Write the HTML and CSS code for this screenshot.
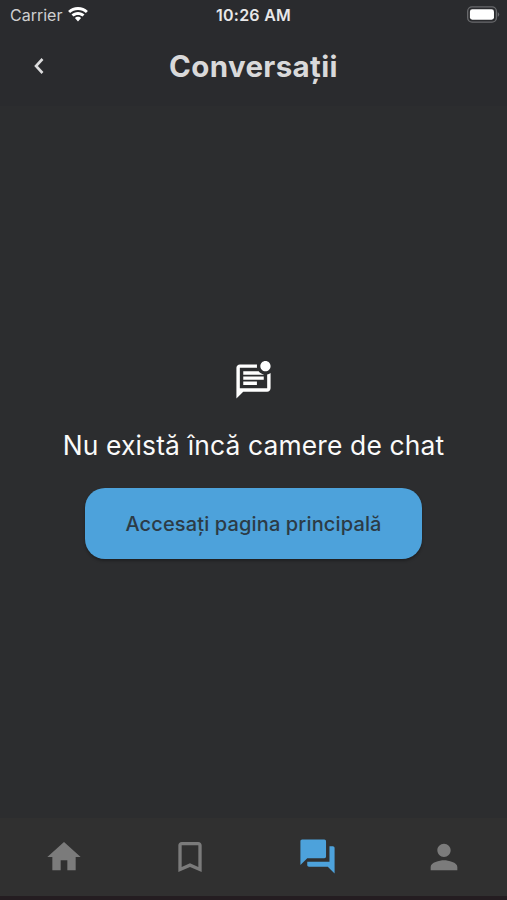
FILE: index.html
```html
<!DOCTYPE html>
<html lang="ro">
<head>
<meta charset="utf-8">
<title>Conversații</title>
<link rel="stylesheet" href="styles.css">
</head>
<body>
<div class="screen">
  <header class="top">
    <div class="status">
      <div class="carrier"><span>Carrier</span>
        <svg class="wifi" viewBox="0 0 20 15"><path d="M10 0C6.200 0 2.700 1.500.100 3.900l2 2.100C4.200 4.100 7 2.900 10 2.900s5.800 1.200 7.900 3.100l2-2.100C17.300 1.500 13.800 0 10 0zM10 5C7.500 5 5.200 6 3.500 7.500l2 2.100C6.700 8.500 8.300 7.900 10 7.900s3.300.6 4.500 1.700l2-2.100C14.800 6 12.500 5 10 5zM10 9.800c-1.200 0-2.300.5-3.100 1.200L10 14.400l3.100-3.400c-.8-.7-1.900-1.200-3.100-1.200z"/></svg>
      </div>
      <span class="time">10:26 AM</span>
      <svg class="battery" viewBox="0 0 34 17"><rect x=".7" y=".7" width="29.600" height="15.600" rx="4.500" fill="none" stroke="#68696c" stroke-width="1.400"/><rect x="3" y="3.200" width="24.800" height="10.600" rx="2.500" fill="#fff"/><path d="M31.700 6q3 2.500 0 5z" fill="#68696c"/></svg>
    </div>
    <div class="bar">
      <svg class="back" viewBox="0 0 12 18"><path d="M9.500 2 3 9l6.500 7"/></svg>
      <h1>Conversații</h1>
    </div>
  </header>
  <main class="empty">
    <svg class="chat" viewBox="0 0 24 24"><path d="M22 6.980V16c0 1.100-.9 2-2 2H6l-4 4V4c0-1.100.9-2 2-2h10.100c-.06.320-.1.660-.1 1s.04.680.1 1H4v12h16V7.900c.74-.15 1.420-.48 2-.92zM16 3c0 1.660 1.340 3 3 3s3-1.340 3-3-1.340-3-3-3-3 1.340-3 3zM6 12v2h8v-2H6zm0-3v2h12V9H6zm0-3v2h12v-.1c-1.210-.25-2.250-.95-2.970-1.900H6z"/></svg>
    <p>Nu există încă camere de chat</p>
    <button class="cta">Accesați pagina principală</button>
  </main>
  <nav class="tabs">
    <a class="home"><svg viewBox="0 0 24 24"><path d="M10 20v-6h4v6h5v-8h3L12 3 2 12h3v8z"/></svg></a>
    <a><svg viewBox="0 0 24 24"><path d="M17 3H7c-1.100 0-2 .9-2 2v16l7-3 7 3V5c0-1.100-.9-2-2-2zm0 15-5-2.180L7 18V5h10v13z"/></svg></a>
    <a class="active"><svg viewBox="0 0 24 24"><path d="M21 6h-2v9H6v2c0 .55.450 1 1 1h11l4 4V7c0-.55-.45-1-1-1zm-4 6V3c0-.55-.45-1-1-1H3c-.55 0-1 .45-1 1v14l4-4h10c.55 0 1-.45 1-1z"/></svg></a>
    <a><svg viewBox="0 0 24 24"><path d="M12 12c2.210 0 4-1.790 4-4s-1.790-4-4-4-4 1.790-4 4 1.790 4 4 4zm0 2c-2.670 0-8 1.340-8 4v2h16v-2c0-2.660-5.330-4-8-4z"/></svg></a>
  </nav>
</div>
</body>
</html>
```
FILE: styles.css
```css
* { box-sizing: border-box; }
body { margin: 0; background: #2c2d2f; font-family: Inter, "Liberation Sans", sans-serif; }
.screen { width: 507px; height: 900px; display: flex; flex-direction: column; overflow: hidden; }
.top { height: 106px; background: #2a2b2e; }
.status { height: 29px; display: grid; grid-template-columns: 1fr auto 1fr; align-items: center; padding: 0 7px 0 10px; color: #e8e8e9; font-size: 16px; }
.carrier { display: flex; align-items: center; gap: 6px; color: #cfcfd0; letter-spacing: 0; }
.wifi { width: 20px; height: 15px; fill: #fff; }
.time { font-weight: 600; letter-spacing: .25px; margin-right: 3px; }
.battery { width: 33px; height: 17px; justify-self: end; }
.bar { height: 74px; display: grid; grid-template-columns: 80px 1fr 80px; align-items: center; }
.back { width: 12px; height: 18px; margin-left: 33px; fill: none; stroke: #dcdcdd; stroke-width: 2.6; }
h1 { margin: 0 0 1px; text-align: center; font-size: 29.5px; line-height: 36px; font-weight: 700; letter-spacing: .35px; color: #d9d9da; }
.empty { flex: 1; display: flex; flex-direction: column; align-items: center; padding-top: 255px; }
.chat { width: 41px; height: 41px; fill: #fff; }
.empty p { margin: 25px 0 0; font-size: 26.4px; line-height: 36px; letter-spacing: .16px; color: #fafafa; white-space: nowrap; }
.cta { margin-top: 25px; width: 337px; height: 71px; border: 0; border-radius: 20px; background: #4da2db; color: #2c3b46; font: 500 20px Inter, "Liberation Sans", sans-serif; letter-spacing: .14px; white-space: nowrap; box-shadow: 0 2px 3px rgba(0,0,0,.3); }
.tabs { height: 82px; display: grid; grid-template-columns: repeat(4, 1fr); background: #303030; padding-top: 19px; border-bottom: 4px solid #241d21; }
.tabs a { display: flex; justify-content: center; }
.tabs svg { width: 40px; height: 40px; fill: #7b7b7b; }
.tabs .home svg { margin-left: 1px; }
.tabs .active svg { width: 41px; height: 41px; margin-left: 1px; margin-top: -1px; fill: #4da2db; }
```
